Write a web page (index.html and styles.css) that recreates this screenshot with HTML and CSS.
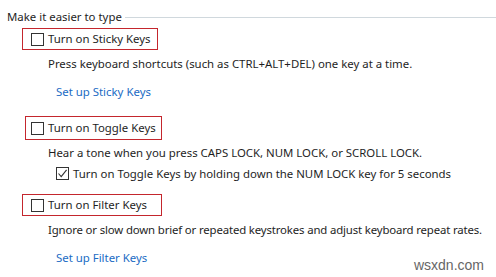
FILE: index.html
```html
<!DOCTYPE html>
<html>
<head>
<meta charset="utf-8">
<link rel="stylesheet" href="styles.css">
</head>
<body>
<div class="page">
  <div class="group-title">
    <span class="title-text">Make it easier to type</span>
    <span class="title-rule"></span>
  </div>

  <div class="option opt-sticky">
    <span class="box"></span><span class="label">Turn on Sticky Keys</span>
  </div>
  <p class="desc desc-sticky">Press keyboard shortcuts (such as CTRL+ALT+DEL) one key at a time.</p>
  <a class="link link-sticky">Set up Sticky Keys</a>

  <div class="option opt-toggle">
    <span class="box"></span><span class="label">Turn on Toggle Keys</span>
  </div>
  <p class="desc desc-toggle">Hear a tone when you press CAPS LOCK, NUM LOCK, or SCROLL LOCK.</p>
  <div class="sub-option">
    <span class="box checked"><svg width="11" height="11" viewBox="0 0 11 11"><path d="M1.5 5.5 L4.2 8.6 L9.6 1.8" fill="none" stroke="#333" stroke-width="1.1"/></svg></span><span class="label">Turn on Toggle Keys by holding down the NUM LOCK key for 5 seconds</span>
  </div>

  <div class="option opt-filter">
    <span class="box"></span><span class="label">Turn on Filter Keys</span>
  </div>
  <p class="desc desc-filter">Ignore or slow down brief or repeated keystrokes and adjust keyboard repeat rates.</p>
  <a class="link link-filter">Set up Filter Keys</a>

  <div class="watermark">wsxdn.com</div>
</div>
</body>
</html>
```

FILE: styles.css
```css
html, body {
  margin: 0;
  padding: 0;
  background: #ffffff;
}
body {
  width: 496px;
  height: 277px;
  overflow: hidden;
  font-family: "Noto Sans", "Open Sans", sans-serif;
  font-size: 11.4px;
  color: #1e1e1e;
}
.page {
  position: relative;
  width: 496px;
  height: 277px;
  padding-top: 9px;
  box-sizing: border-box;
}
.group-title {
  display: flex;
  align-items: center;
  height: 16px;
  padding-left: 7px;
}
.title-text {
  line-height: 16px;
}
.title-rule {
  flex: 1;
  height: 1px;
  background: #d0d8dd;
  margin-left: 3px;
}
.option {
  display: flex;
  align-items: center;
  border: 1px solid #c4262d;
  box-sizing: border-box;
  white-space: nowrap;
}
.box {
  display: inline-block;
  width: 13px;
  height: 13px;
  border: 1px solid #333333;
  box-sizing: border-box;
  background: #fff;
  flex: none;
}
.box svg {
  display: block;
}
.label {
  margin-left: 4px;
  line-height: 16px;
  white-space: nowrap;
}
.opt-sticky {
  margin: 3px 0 0 22px;
  width: 136px;
  height: 22px;
  padding-left: 8px;
}
.opt-toggle {
  margin: 16px 0 0 25px;
  width: 137px;
  height: 24px;
  padding-left: 5px;
}
.opt-filter {
  margin: 14px 0 0 22px;
  width: 140px;
  height: 22px;
  padding-left: 8px;
}
.desc {
  margin: 6px 0 0 48px;
  line-height: 16px;
  white-space: nowrap;
}
.desc-toggle {
  margin-top: 5px;
}
.desc-filter {
  letter-spacing: -0.15px;
}
.link {
  display: block;
  margin: 12px 0 0 56px;
  line-height: 16px;
  color: #1a6bc4;
}
.sub-option {
  display: flex;
  align-items: center;
  margin: 6px 0 0 56px;
  height: 13px;
}
.watermark {
  position: absolute;
  right: 12px;
  bottom: 4px;
  font-family: "Liberation Sans", sans-serif;
  font-size: 14px;
  color: #666666;
}
```
